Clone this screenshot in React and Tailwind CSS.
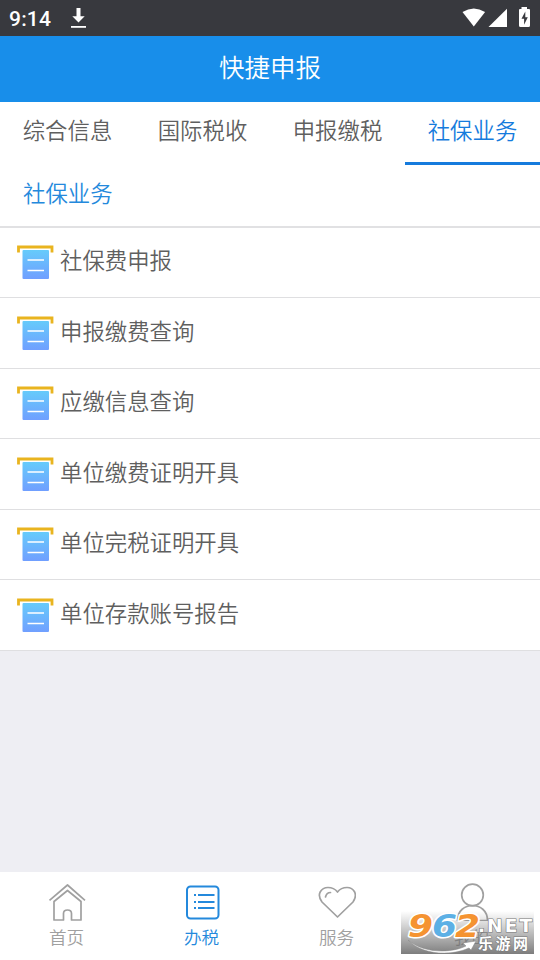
import { useState } from "react";
import clsx from "clsx";

const tabs = ["综合信息", "国际税收", "申报缴税", "社保业务"];

const services = [
  "社保费申报",
  "申报缴费查询",
  "应缴信息查询",
  "单位缴费证明开具",
  "单位完税证明开具",
  "单位存款账号报告",
];

const StatusBar = () => (
  <div className="h-9 shrink-0 bg-[#38393e] flex items-center justify-between pl-[9px] pr-[9px] text-white">
    <div className="flex items-center gap-[19px]">
      <span className="font-['Roboto',sans-serif] text-[21px] font-medium leading-9 tracking-[0.2px] pt-0.5">
        9:14
      </span>
      <svg width="16" height="22" viewBox="0 0 16 22" fill="currentColor">
        <path d="M6.500 1h4v8.200h4.200L8.500 15.500 2.300 9.200H6.500z" />
        <path d="M1 19h15v1.800H1z" />
      </svg>
    </div>
    <svg width="70" height="22" viewBox="0 0 70 22" fill="currentColor">
      <path d="M1.500 5Q12.800-2.200 24.100 5L12.800 19.500z" />
      <path d="M46 1.800V20H27.500z" />
      <path d="M60.500 0h5.500v2h2q1 0 1 1v15.500q0 1.500-1.500 1.500h-8q-1.500 0-1.500-1.500V3q0-1 1-1h1.500z" />
      <path d="M64.300 4.500L60.500 11.800h2.600v6l3.700-7.500h-2.500z" fill="#38393e" />
    </svg>
  </div>
);

const FormIcon = () => (
  <svg width="37" height="36" viewBox="0 0 37 36" fill="none">
    <defs>
      <linearGradient id="sheet" x1="0" y1="0" x2="0" y2="1">
        <stop offset="0" stopColor="#66cbfb" />
        <stop offset="1" stopColor="#709fff" />
      </linearGradient>
    </defs>
    <path d="M1.500 8.500V3h33.500V8.500" stroke="#e9b41f" strokeWidth="2.800" />
    <rect x="5.500" y="6" width="26.500" height="29" rx="1" fill="url(#sheet)" />
    <path d="M10.500 16h16.500M10.500 26.500h16.500" stroke="#fff" strokeWidth="1.500" />
  </svg>
);

const HomeIcon = () => (
  <svg width="38" height="38" viewBox="0 0 38 38" fill="none" stroke="currentColor" strokeWidth="1.700" strokeLinejoin="round">
    <path d="M1.500 17.300L19.500 2l17.500 15.300" />
    <path d="M6 18.500V37H15.500v-6.500q0-3.500 4-3.500t4 3.500V37h9.500V18.500L19.500 7.500z" />
  </svg>
);

const ListIcon = () => (
  <svg width="38" height="38" viewBox="0 0 38 38" fill="none" stroke="currentColor">
    <rect x="4" y="3.500" width="31.500" height="32" rx="3.500" strokeWidth="2" />
    <path d="M15 12H31.500M15 19H31.500M15 25H31.500" strokeWidth="1.800" />
    <path d="M11 12h2M11 19h2M11 25h2" strokeWidth="2" />
  </svg>
);

const HeartIcon = () => (
  <svg width="38" height="38" viewBox="0 0 38 38" fill="none" stroke="currentColor" strokeWidth="1.700" strokeLinejoin="round" strokeLinecap="round">
    <path d="M19.500 34L4 19C-2 11 3.500 4.500 10 4.500q6 0 9.500 4.500 3.500-4.500 9.500-4.500C35.500 4.500 40.500 11 35 19z" />
    <path d="M7.500 14q1-4.500 5-4.500" />
  </svg>
);

const UserIcon = () => (
  <svg width="38" height="38" viewBox="0 0 38 38" fill="none" stroke="currentColor" strokeWidth="1.700">
    <circle cx="19.500" cy="12" r="10.800" />
    <path d="M4.500 37.500C4.500 17.500 34.500 17.500 34.500 37.500z" />
  </svg>
);

const navItems = [
  { label: "首页", Icon: HomeIcon },
  { label: "办税", Icon: ListIcon },
  { label: "服务", Icon: HeartIcon },
  { label: "我的", Icon: UserIcon },
];

const SiteBadge = () => (
  <svg
    className="absolute right-1.5 bottom-1.5 overflow-visible"
    width="133"
    height="43"
    viewBox="0 0 133 43"
  >
    <defs>
      <linearGradient id="badge" x1="0" y1="0" x2="0" y2="1">
        <stop offset="0" stopColor="#777" stopOpacity="0" />
        <stop offset="0.500" stopColor="#707070" stopOpacity="0.450" />
        <stop offset="1" stopColor="#666" stopOpacity="0.850" />
      </linearGradient>
    </defs>
    <rect width="133" height="43" fill="url(#badge)" />
    <path d="M7 29C23 43 51 42 65 35l-3-3 13-2-5 9-2-2C48 46 20 43 7 29z" fill="#fff" stroke="#888" strokeWidth="0.500" />
    <g
      fontFamily="'DejaVu Sans', sans-serif"
      fontWeight="700"
      fontStyle="italic"
      fontSize="32"
      strokeLinejoin="round"
      stroke="#fff"
      strokeWidth="3"
      paintOrder="stroke"
    >
      <text x="7" y="26" textLength="25" lengthAdjust="spacingAndGlyphs" fill="#f59331">9</text>
      <text x="31" y="26" textLength="25" lengthAdjust="spacingAndGlyphs" fill="#5cb0e5">6</text>
      <text x="54" y="26" textLength="25" lengthAdjust="spacingAndGlyphs" fill="#f59331">2</text>
    </g>
    <text x="77" y="21" textLength="54" fontFamily="'DejaVu Sans', sans-serif" fontWeight="700" fontSize="18.500" fill="#fff" stroke="#777" strokeWidth="1.200" paintOrder="stroke">
      .NET
    </text>
    <text x="77" y="38" textLength="50" fontFamily="'Noto Sans CJK SC', sans-serif" fontWeight="700" fontSize="15" fill="#fff" stroke="#777" strokeWidth="1" paintOrder="stroke">
      乐游网
    </text>
  </svg>
);

const App = () => {
  const [activeTab, setActiveTab] = useState(3);
  const [activeNav, setActiveNav] = useState(1);

  return (
    <div className="relative w-full h-screen flex flex-col overflow-hidden bg-[#eeeef3] font-['Noto_Sans_CJK_SC',sans-serif] font-[350] text-[#5f5f5f]">
      <StatusBar />

      <header className="h-[66px] shrink-0 bg-[#188eea] flex items-center justify-center text-white text-[25.5px] leading-none pb-[6px]">
        快捷申报
      </header>

      {/* Tabs */}
      <div className="h-[63px] shrink-0 bg-white grid grid-cols-4">
        {tabs.map((tab, index) => (
          <button
            key={tab}
            onClick={() => setActiveTab(index)}
            className={clsx(
              "border-b-3 text-[22.4px] leading-none pb-[5px]",
              activeTab === index
                ? "border-[#157bdd] text-[#157bdd]"
                : "border-transparent"
            )}
          >
            {tab}
          </button>
        ))}
      </div>

      <h2 className="h-[62.500px] shrink-0 bg-white border-b-2 border-[#e1e1e3] flex items-center pl-[23px] pb-[6px] text-[22.4px] font-[350] leading-none text-[#2489dc]">
        {tabs[activeTab]}
      </h2>

      {/* Services */}
      <ul className="flex-1">
        {services.map((service) => (
          <li
            key={service}
            className="h-[70.500px] bg-white border-b border-[#dfdfe1] flex items-center gap-[6px] pl-[17px] text-[22.4px] leading-none"
          >
            <FormIcon />
            <span className="pb-[6px]">{service}</span>
          </li>
        ))}
      </ul>

      {/* Bottom navigation */}
      <nav className="h-[88px] shrink-0 bg-white grid grid-cols-4">
        {navItems.map(({ label, Icon }, index) => (
          <button
            key={label}
            onClick={() => setActiveNav(index)}
            className={clsx(
              "flex flex-col items-center pt-[11px] pr-px text-[17.6px] leading-none",
              activeNav === index ? "text-[#2489dc]" : "text-[#a0a0a0]"
            )}
          >
            <Icon />
            <span className="mt-[7px] mr-px">{label}</span>
          </button>
        ))}
      </nav>

      <SiteBadge />
    </div>
  );
};

export default App;
